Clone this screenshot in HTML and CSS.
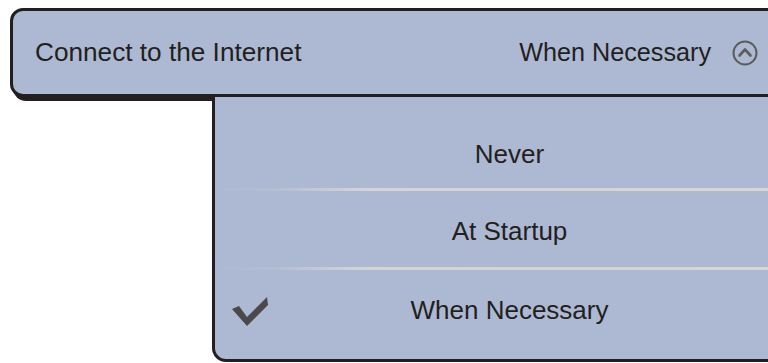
FILE: index.html
```html
<!DOCTYPE html>
<html>
<head>
<meta charset="utf-8">
<link rel="stylesheet" href="styles.css">
</head>
<body>
<div class="page">
  <div class="header">
    <span class="label">Connect to the Internet</span>
    <span class="value">When Necessary
      <svg class="chev" width="26" height="26" viewBox="0 0 26 26">
        <circle cx="13" cy="13" r="11.5" fill="none" stroke="#5c5c5c" stroke-width="2"/>
        <path d="M7.5 15.5 L13 9.5 L18.5 15.5" fill="none" stroke="#5c5c5c" stroke-width="2.6" stroke-linecap="round" stroke-linejoin="round"/>
      </svg>
    </span>
  </div>
  <div class="menu">
    <div class="item item-first">Never</div>
    <div class="sep"></div>
    <div class="item item-mid">At Startup</div>
    <div class="sep"></div>
    <div class="item item-last">
      <svg class="check" width="38" height="30" viewBox="0 0 38 30">
        <polygon points="0,12 7,9 15,20 35,0 36,8 15,29" fill="#4a4a4a"/>
      </svg>
      When Necessary
    </div>
  </div>
</div>
</body>
</html>
```

FILE: styles.css
```css
html, body {
  margin: 0;
  padding: 0;
  background: #ffffff;
  overflow: hidden;
}
.page {
  width: 768px;
  height: 363px;
  overflow: hidden;
  padding-top: 8px;
  box-sizing: border-box;
  font-family: "Liberation Sans", Arial, sans-serif;
  color: #231f20;
}
.header {
  margin-left: 10px;
  width: 800px;
  height: 89px;
  box-sizing: border-box;
  border: 3px solid #231f20;
  border-radius: 13px;
  background: #adb9d2;
  box-shadow: 3px 4px 0 #231f20;
  display: flex;
  align-items: center;
  justify-content: space-between;
  padding-left: 22px;
  padding-right: 49px;
  font-size: 26.2px;
}
.value {
  display: flex;
  align-items: center;
  gap: 21px;
  font-size: 25.2px;
}
.chev {
  display: block;
}
.menu {
  margin-left: 212px;
  width: 592px;
  height: 265px;
  box-sizing: border-box;
  border-left: 3px solid #231f20;
  border-bottom: 3px solid #231f20;
  border-bottom-left-radius: 14px;
  background: #adb9d2;
  display: flex;
  flex-direction: column;
  font-size: 26px;
  position: relative;
}
.item {
  display: flex;
  align-items: center;
  justify-content: center;
  box-sizing: border-box;
  position: relative;
}
.item-first {
  height: 91px;
  padding-top: 24px;
}
.item-mid {
  height: 76px;
  padding-top: 4px;
}
.item-last {
  flex: 1;
  padding-bottom: 8px;
}
.sep {
  height: 3px;
  background: linear-gradient(to right, #adb9d2 0px, #b4bed3 60px, #d4d4d6 150px, #d6d6d6 100%);
}
.check {
  position: absolute;
  left: 17px;
  top: 27px;
}
```
